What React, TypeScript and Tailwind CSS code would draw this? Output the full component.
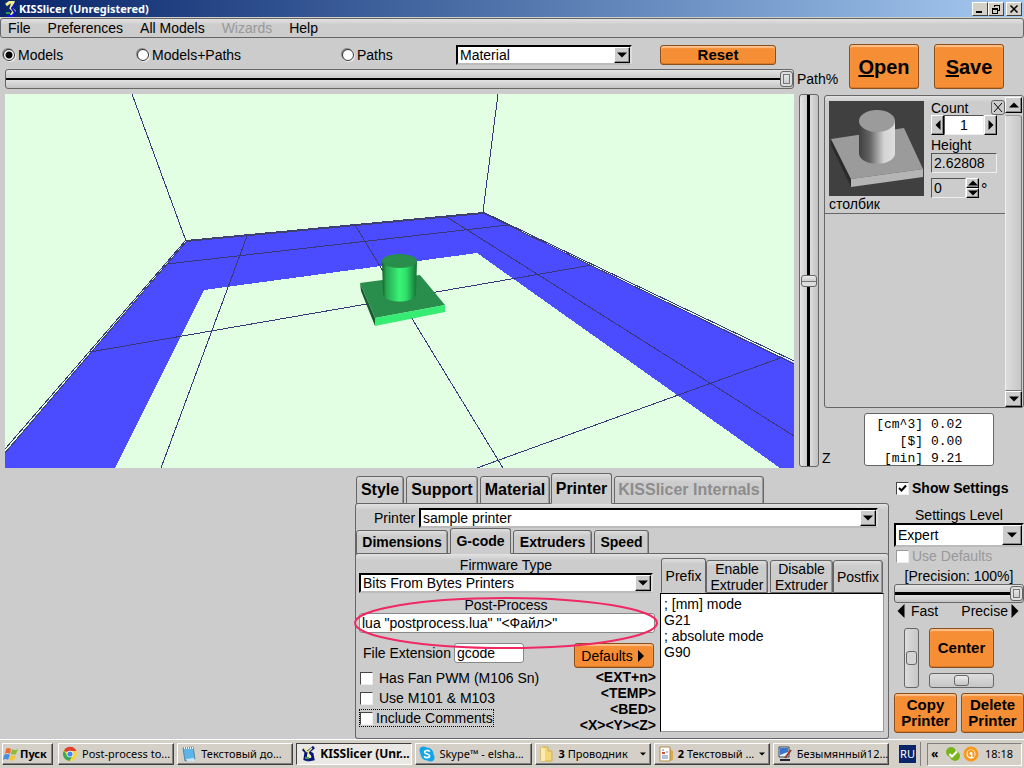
import { useState, type ReactNode } from "react";

type Point = [number, number];

const MENU_ITEMS = [
  { label: "File", disabled: false },
  { label: "Preferences", disabled: false },
  { label: "All Models", disabled: false },
  { label: "Wizards", disabled: true },
  { label: "Help", disabled: false },
];

const GRID_LINES: [Point, Point][] = [
  [[167, 264], [508, 225]],
  [[90, 352], [592, 265]],
  [[477, 468], [783, 357]],
  [[247, 236], [161, 468]],
  [[355, 225], [503, 468]],
  [[445, 216], [794, 436]],
  [[132, 94], [186, 241]],
  [[498, 94], [483, 212]],
  [[186, 240], [5, 449]],
  [[483, 212], [794, 361]],
];

const PREFIX_GCODE = "; [mm] mode\nG21\n; absolute mode\nG90";

const FRAME = "rounded-[3px] border border-[#666] bg-linear-to-b from-[#e2e2e2] via-[#ccc] via-[6px] to-[#ccc]";
const ORANGE =
  "rounded-[3px] border border-[#8a4f1c] bg-[#f58e34] shadow-[inset_0_2px_1px_#fbc08c,inset_0_-1px_0_#d97a28] text-black";
const SUNKEN = "border border-t-[#555] border-l-[#555] border-r-[#eee] border-b-[#eee]";
const RAISED = "border border-t-white border-l-white border-r-black border-b-black shadow-[inset_-1px_-1px_0_#888]";

function Triangle({ dir, size = 10 }: { dir: "up" | "down" | "left" | "right"; size?: number }) {
  const paths = {
    up: "M0 7.5 L5 2.5 L10 7.5 Z",
    down: "M0 2.5 L5 7.5 L10 2.5 Z",
    left: "M7.5 0 L2.5 5 L7.5 10 Z",
    right: "M2.5 0 L7.5 5 L2.5 10 Z",
  };
  return (
    <svg width={size} height={size} viewBox="0 0 10 10" className="shrink-0" aria-hidden="true">
      <path d={paths[dir]} fill="currentColor" />
    </svg>
  );
}

function Dropdown({ id, value, label, className }: { id: string; value: string; label?: string; className: string }) {
  return (
    <div className={`relative ${className}`}>
      <select
        id={id}
        aria-label={label}
        className="h-full w-full appearance-none border-2 border-t-black border-r-[#ddd] border-b-[#bbb] border-l-black bg-white pl-0.5 leading-4 outline-none"
      >
        <option>{value}</option>
      </select>
      <span className={`pointer-events-none absolute top-0.5 right-0.5 bottom-0.5 flex aspect-square items-center justify-center bg-[#ccc] ${RAISED}`}>
        <Triangle dir="down" />
      </span>
    </div>
  );
}

function Check({ label, checked = false, disabled = false, className = "" }: { label: string; checked?: boolean; disabled?: boolean; className?: string }) {
  return (
    <label className={`flex h-4 items-center ${disabled ? "text-[#999]" : ""} ${className}`}>
      <span className="relative mr-[3px] h-[13px] w-[13px] shrink-0">
        <input
          type="checkbox"
          defaultChecked={checked}
          disabled={disabled}
          className="peer block h-[13px] w-[13px] appearance-none border border-t-[#444] border-r-[#eee] border-b-[#eee] border-l-[#444] bg-white disabled:border-t-[#999] disabled:border-l-[#999]"
        />
        <svg viewBox="0 0 13 13" className="pointer-events-none absolute inset-0 hidden peer-checked:block" aria-hidden="true">
          <path d="M3 6 L5.5 8.5 L10 3.5" fill="none" stroke="#000" strokeWidth="2" />
        </svg>
      </span>
      {label}
    </label>
  );
}

function Tab({ children, active, disabled, className }: { children: ReactNode; active?: boolean; disabled?: boolean; className: string }) {
  return (
    <button
      type="button"
      role="tab"
      aria-selected={!!active}
      disabled={disabled}
      className={`rounded-t-[3px] border border-[#666] bg-linear-to-b from-[#dedede] via-[#ccc] via-[5px] to-[#ccc] whitespace-nowrap disabled:text-[#8c8c8c] ${
        active ? "relative border-b-[#ccc]" : "shadow-[inset_-1px_0_0_#999]"
      } ${className}`}
    >
      {children}
    </button>
  );
}

const H_SLIDER =
  "m-0 block appearance-none rounded-[3px] border border-[#666] [&::-webkit-slider-thumb]:appearance-none [&::-webkit-slider-thumb]:rounded-[3px] [&::-webkit-slider-thumb]:border [&::-webkit-slider-thumb]:border-[#666] [&::-webkit-slider-thumb]:bg-linear-to-b [&::-webkit-slider-thumb]:from-[#eee] [&::-webkit-slider-thumb]:to-[#c4c4c4]";
const H_GROOVE =
  "bg-[linear-gradient(to_bottom,#e4e4e4_0,#ccc_40%,#ccc_41%,#ccc_42%,#000_42%,#000_57%,#e0e0e0_57%,#c4c4c4_100%)]";
const KNOB_LINE =
  "[&::-webkit-slider-thumb]:shadow-[inset_0_0_0_2px_#ddd,inset_0_0_0_3px_#777] [&::-webkit-slider-thumb]:w-[13px]";

function PrintBedView() {
  return (
    <svg viewBox="5 94 789 374" className="block w-full bg-[#e3ffe3]" role="img" aria-label="Print bed">
      <defs>
        <linearGradient id="bedCylinder">
          <stop offset="0" stopColor="#115c2c" />
          <stop offset="0.12" stopColor="#28a650" />
          <stop offset="0.5" stopColor="#39f577" />
          <stop offset="0.7" stopColor="#30dc68" />
          <stop offset="1" stopColor="#156e34" />
        </linearGradient>
      </defs>
      <path
        d="M186 241 L483 213 L794 363 V468 H780 L477 253 L204 290 L115 468 H5 V452 Z"
        fill="#4b4bff"
        shapeRendering="crispEdges"
      />
      <path d="M187 241 L5 453 M483 213 L794 364" stroke="#404070" fill="none" shapeRendering="crispEdges" />
      {GRID_LINES.map(([from, to], index) => (
        <line
          key={index}
          x1={from[0]}
          y1={from[1]}
          x2={to[0]}
          y2={to[1]}
          stroke="#383878"
          strokeWidth="1"
          shapeRendering="crispEdges"
        />
      ))}
      <path d="M186 241 L483 213" stroke="#404070" strokeWidth="2" shapeRendering="crispEdges" />
      <path d="M360 283 L375 318 V326 L361 291 Z" fill="#155a2c" />
      <path d="M360 283 L420 275 L445 305 L375 318 Z" fill="#298d4c" />
      <path d="M375 318 L445 305 V312 L375 326 Z" fill="#36ec72" />
      <path d="M382 261 H417 L416 294 C415 304 384 304 383 294 Z" fill="url(#bedCylinder)" />
      <ellipse cx="399.5" cy="261" rx="17.5" ry="7" fill="#298d4c" />
    </svg>
  );
}

function ModelThumbnail() {
  return (
    <svg width="95" height="95" viewBox="0 0 95 95" className="block bg-[#404040]" role="img" aria-label="столбик">
      <defs>
        <linearGradient id="thumbCylinder">
          <stop offset="0" stopColor="#404040" />
          <stop offset="0.3" stopColor="#636363" />
          <stop offset="0.7" stopColor="#d4d4d4" />
          <stop offset="1" stopColor="#dedede" />
        </linearGradient>
      </defs>
      <path d="M2 38 L22 78 V86 L2 44 Z" fill="#2b2b2b" />
      <path d="M2 38 L75 27 L94 68 L22 78 Z" fill="#9b9b9b" />
      <path d="M22 78 L94 68 V76 L22 86 Z" fill="#b5b5b5" />
      <path d="M30 20 H66 V53 C64 66 32 66 30 53 Z" fill="url(#thumbCylinder)" />
      <ellipse cx="48" cy="20" rx="18" ry="11" fill="#9b9b9b" />
    </svg>
  );
}

function KissIcon({ size = 16 }: { size?: number }) {
  return (
    <svg width={size} height={size} viewBox="0 0 16 16" className="shrink-0" aria-hidden="true">
      <path d="M3 3 L6 6 L5 13 L8 14 M14 1 L8 6 L12 8 L13 13 L8 14" fill="none" stroke="#06147a" strokeWidth="3" />
      <path d="M4 2 L7 6 M12 2 L8 6 L9 9 L11 11" fill="none" stroke="#f0ee8c" strokeWidth="1.5" />
      <path d="M5 12 H9" stroke="#3f9f4a" strokeWidth="2" />
    </svg>
  );
}

function TitleBar() {
  const button =
    "flex h-3.5 w-4 items-center justify-center border border-t-white border-l-white border-r-[#404040] border-b-[#404040] bg-[#d4d0c8]";
  return (
    <header className="flex h-[18px] items-center border-b border-[#d4d0c8] bg-linear-to-r from-[#0a246a] to-[#a6caf0] pr-0.5 pl-0.5 font-['Noto_Sans',sans-serif] text-[11px] font-bold text-white">
      <svg width="16" height="16" viewBox="0 0 16 16" aria-hidden="true">
        <path d="M4 4 L8 1 H11 L9 7 L12 10 L9 15" fill="none" stroke="#f0ee8c" strokeWidth="3" />
        <path d="M13 3 L10 7 L13 12 L10 15 H5" fill="none" stroke="#1010e0" strokeWidth="2" />
        <path d="M4 12 H8" stroke="#2d9b45" strokeWidth="2" />
      </svg>
      <h1 className="ml-px text-[11px] leading-4">KISSlicer (Unregistered)</h1>
      <div className="ml-auto flex">
        <button type="button" aria-label="Minimize" className={button}>
          <svg width="10" height="10" viewBox="0 0 10 10"><path d="M1 8 H7" stroke="#000" strokeWidth="2" /></svg>
        </button>
        <button type="button" aria-label="Restore" className={button}>
          <svg width="10" height="10" viewBox="0 0 10 10" fill="none" stroke="#000" shapeRendering="crispEdges">
            <path d="M3.5 3 V1.5 H8.5 V6.5 H7 M3 1.5 H9 M1.5 4.5 H6.5 V9.5 H1.5 Z M1 5.5 H7" />
          </svg>
        </button>
        <button type="button" aria-label="Close" className={`ml-0.5 ${button}`}>
          <svg width="10" height="10" viewBox="0 0 10 10"><path d="M1.5 1.5 L8.5 8.5 M8.5 1.5 L1.5 8.5" stroke="#000" strokeWidth="1.5" /></svg>
        </button>
      </div>
    </header>
  );
}

function Toolbar() {
  const [mode, setMode] = useState("Models");
  const modes = [
    { name: "Models", width: "w-[134px]" },
    { name: "Models+Paths", width: "w-[205px]" },
    { name: "Paths", width: "w-[114px]" },
  ];
  return (
    <div className="flex">
      <div className="min-w-0 flex-1">
        <div className="flex h-[31px] items-center pt-0.5 pl-[3px]">
          {modes.map(({ name, width }) => (
            <label key={name} className={`flex items-center gap-[3px] ${width}`}>
              <input
                type="radio"
                name="view-mode"
                checked={mode === name}
                onChange={() => setMode(name)}
                className="h-3 w-3 appearance-none rounded-full border border-[#333] bg-white shadow-[1px_1px_0_#eee,-1px_-1px_0_#888] checked:bg-[radial-gradient(circle,#000_3px,#fff_4px)]"
              />
              {name}
            </label>
          ))}
          <Dropdown id="color-mode" label="Color by" value="Material" className="h-5 w-[176px]" />
          <button type="button" className={`ml-7 h-5 w-[116px] text-[15px] leading-4 font-bold ${ORANGE}`}>
            Reset
          </button>
        </div>
        <div className="flex items-center pl-[5px]">
          <input
            id="path-percent"
            type="range"
            defaultValue={100}
            className={`h-5 min-w-0 flex-1 [&::-webkit-slider-thumb]:h-4 ${H_SLIDER} ${H_GROOVE} ${KNOB_LINE}`}
          />
          <label htmlFor="path-percent" className="w-[55px] pl-[3px]">Path%</label>
        </div>
      </div>
      <div className="flex gap-[15px] pt-1.5 pr-5">
        <button type="button" className={`h-[45px] w-[70px] text-xl font-bold ${ORANGE}`}>
          <span className="underline">O</span>pen
        </button>
        <button type="button" className={`h-[45px] w-[70px] text-xl font-bold ${ORANGE}`}>
          <span className="underline">S</span>ave
        </button>
      </div>
    </div>
  );
}

function ModelList() {
  return (
    <section className={`ml-[3px] flex h-[313px] pr-px ${FRAME}`}>
      <div className="min-w-0 flex-1">
        <div className="flex border-b border-[#666] pt-[5px] pb-px pl-1">
          <div className="w-[95px]">
            <ModelThumbnail />
            <p className="leading-4">столбик</p>
          </div>
          <div className="min-w-0 flex-1 pl-[7px]">
            <div className="flex h-[13px] items-center">
              <label htmlFor="model-count">Count</label>
              <button type="button" aria-label="Remove model" className="ml-auto flex h-[15px] w-[14px] items-center justify-center rounded-[3px] border border-[#666]">
                <svg width="10" height="11" viewBox="0 0 10 11"><path d="M1 1 L9 10 M9 1 L1 10" stroke="#000" /></svg>
              </button>
            </div>
            <div className="mt-px flex h-5">
              <button type="button" aria-label="Fewer" className={`flex w-[13px] items-center justify-center ${RAISED}`}>
                <Triangle dir="left" />
              </button>
              <input id="model-count" defaultValue="1" className={`w-10 bg-white text-center ${SUNKEN}`} />
              <button type="button" aria-label="More" className={`flex w-[13px] items-center justify-center ${RAISED}`}>
                <Triangle dir="right" />
              </button>
            </div>
            <label htmlFor="model-height" className="mt-0.5 block leading-4">Height</label>
            <input id="model-height" readOnly defaultValue="2.62808" className={`block h-5 w-[66px] pl-0.5 ${SUNKEN}`} />
            <div className="mt-[5px] flex h-5">
              <input aria-label="Rotation" defaultValue="0" className={`w-[35px] pl-0.5 ${SUNKEN}`} />
              <div className="flex w-[13px] flex-col">
                <button type="button" aria-label="Rotate up" className={`flex h-2.5 items-center justify-center ${RAISED}`}>
                  <Triangle dir="up" />
                </button>
                <button type="button" aria-label="Rotate down" className={`flex h-2.5 items-center justify-center ${RAISED}`}>
                  <Triangle dir="down" />
                </button>
              </div>
              <span className="pl-0.5 text-base">°</span>
            </div>
          </div>
        </div>
      </div>
      <div className="flex w-[17px] flex-col pt-px">
        <button type="button" aria-label="Scroll up" className={`flex h-4 items-center justify-center bg-[#ccc] ${RAISED}`}>
          <Triangle dir="up" />
        </button>
        <div className="mt-0.5 flex-1 rounded-t-[3px] border border-[#777] border-t-[#999] border-l-[#eee] bg-linear-to-r from-[#ddd] to-[#c6c6c6]" />
        <button type="button" aria-label="Scroll down" className={`flex h-4 items-center justify-center bg-[#ccc] ${RAISED}`}>
          <Triangle dir="down" />
        </button>
      </div>
    </section>
  );
}

function Workspace() {
  const stats = [
    ["[cm^3]", "0.02"],
    ["[$]", "0.00"],
    ["[min]", "9.21"],
  ];
  return (
    <div className="flex items-start pt-[5px] pl-[5px]">
      <div className="min-w-0 flex-1">
        <PrintBedView />
      </div>
      <input
        id="z-slider"
        type="range"
        defaultValue={50}
        className="m-0 ml-[5px] block h-[373px] w-5 appearance-none rounded-[3px] border border-[#666] bg-[linear-gradient(to_right,#e4e4e4_0,#ccc_40%,#000_40%,#000_56%,#ddd_56%,#c0c0c0_100%)] [direction:rtl] [writing-mode:vertical-lr] [&::-webkit-slider-thumb]:h-3 [&::-webkit-slider-thumb]:w-4 [&::-webkit-slider-thumb]:appearance-none [&::-webkit-slider-thumb]:rounded-[3px] [&::-webkit-slider-thumb]:border [&::-webkit-slider-thumb]:border-[#666] [&::-webkit-slider-thumb]:bg-[linear-gradient(to_bottom,#eee,#ccc_50%,#777_50%,#777_60%,#ddd_60%)]"
      />
      <div className="ml-0.5 w-[203px] pt-px">
        <ModelList />
        <div className="mt-[5px] flex items-end">
          <label htmlFor="z-slider" className="w-[43px] pl-px leading-4">Z</label>
          <table className="block h-[53px] w-[130px] rounded-[3px] border border-[#666] bg-white pt-0.5 font-['Liberation_Mono',monospace] text-[13px] leading-[17px]">
            <tbody>
              {stats.map(([unit, value]) => (
                <tr key={unit}>
                  <th scope="row" className="w-[58px] p-0 text-right font-normal">{unit}</th>
                  <td className="p-0 pl-2">{value}</td>
                </tr>
              ))}
            </tbody>
          </table>
        </div>
      </div>
    </div>
  );
}

function GcodeEditor() {
  return (
    <div className="min-w-0 flex-1">
      <div role="tablist" className="flex items-end pl-px leading-4">
        <Tab active className="h-[35px] w-[45px]">Prefix</Tab>
        <Tab className="h-[33px] w-[62px]">Enable<br />Extruder</Tab>
        <Tab className="ml-0.5 h-[33px] w-[63px]">Disable<br />Extruder</Tab>
        <Tab className="h-[33px] w-[50px]">Postfix</Tab>
      </div>
      <textarea
        aria-label="Prefix G-code"
        defaultValue={PREFIX_GCODE}
        className="block h-[139px] w-full resize-none border border-t-black border-r-[#999] border-b-[#999] border-l-black bg-white px-[3px] py-0.5 leading-4 outline-none"
      />
    </div>
  );
}

function GcodePanel() {
  return (
    <div className={`flex pt-[3px] pr-1 pb-[5px] pl-[3px] ${FRAME}`}>
      <div className="w-[297px] shrink-0">
        <label htmlFor="firmware" className="block w-[294px] text-center leading-4">Firmware Type</label>
        <Dropdown id="firmware" value="Bits From Bytes Printers" className="h-5 w-[294px]" />
        <div className="relative mt-1">
          <label htmlFor="post-process" className="block w-[294px] text-center leading-4">Post-Process</label>
          <input
            id="post-process"
            defaultValue={'lua "postprocess.lua" "<Файл>"'}
            className="block h-5 w-[296px] rounded-[3px] border border-[#888] bg-white pl-0.5 leading-4"
          />
          <svg viewBox="0 0 304 52" className="pointer-events-none absolute top-0 -left-[5px] z-10 h-[52px] w-[304px]" aria-hidden="true">
            <ellipse cx="152" cy="26" rx="151" ry="25" fill="none" stroke="#f02864" strokeWidth="2" />
          </svg>
        </div>
        <div className="mt-2.5 flex justify-between">
          <div>
            <div className="flex h-5 items-center pl-1">
              <label htmlFor="extension" className="w-[91px]">File Extension</label>
              <input id="extension" defaultValue="gcode" className="h-5 w-[70px] rounded-[3px] border border-[#888] bg-white pl-0.5" />
            </div>
            <div className="mt-[7px] flex flex-col items-start gap-1 pl-px">
              <Check label="Has Fan PWM (M106 Sn)" className="gap-[3px]" />
              <Check label="Use M101 & M103" className="gap-[3px]" />
              <Check label="Include Comments" className="outline outline-dotted outline-black" />
            </div>
          </div>
          <div className="flex flex-col items-end">
            <button type="button" className={`mr-0.5 flex h-[25px] w-20 items-center justify-center gap-0.5 ${ORANGE}`}>
              Defaults <Triangle dir="right" size={12} />
            </button>
            <p className="mt-px text-right leading-4 font-bold">
              &lt;EXT+n&gt;<br />&lt;TEMP&gt;<br />&lt;BED&gt;<br />&lt;X&gt;&lt;Y&gt;&lt;Z&gt;
            </p>
          </div>
        </div>
      </div>
      <div className="flex min-w-0 flex-1 pt-px pl-1">
        <GcodeEditor />
      </div>
    </div>
  );
}

function PrinterSettings() {
  return (
    <section className="w-[534px] pt-[5px]">
      <div role="tablist" className="relative -mb-px flex items-end pl-px text-base font-bold">
        <Tab className="h-7 w-12">Style</Tab>
        <Tab className="ml-0.5 h-7 w-[72px]">Support</Tab>
        <Tab className="ml-0.5 h-7 w-[70px]">Material</Tab>
        <Tab active className="ml-px h-[31px] w-[61px]">Printer</Tab>
        <Tab disabled className="ml-0.5 h-7 w-[150px]">KISSlicer Internals</Tab>
      </div>
      <div className={FRAME}>
        <div className="flex items-center pt-1 pr-2.5 pl-[18px]">
          <label htmlFor="printer" className="w-[45px]">Printer</label>
          <Dropdown id="printer" value="sample printer" className="h-5 flex-1" />
        </div>
        <div role="tablist" className="relative -mb-px flex items-end text-sm font-bold">
          <Tab className="h-6 w-[92px]">Dimensions</Tab>
          <Tab active className="ml-0.5 h-[26px] w-[61px]">G-code</Tab>
          <Tab className="ml-0.5 h-6 w-[79px]">Extruders</Tab>
          <Tab className="ml-0.5 h-6 w-[55px]">Speed</Tab>
        </div>
        <div className="-mx-px -mb-px">
          <GcodePanel />
        </div>
      </div>
    </section>
  );
}

function SideControls() {
  return (
    <aside className="ml-[5px] w-[130px] pt-[11px]">
      <Check label="Show Settings" checked className="ml-0.5 h-[18px] font-bold" />
      <label htmlFor="level" className="mt-2.5 block text-center leading-4">Settings Level</label>
      <Dropdown id="level" value="Expert" className="h-6" />
      <Check label="Use Defaults" disabled className="mt-px ml-0.5" />
      <label htmlFor="precision" className="mt-1 block text-center leading-4">[Precision: 100%]</label>
      <input
        id="precision"
        type="range"
        defaultValue={100}
        className={`h-[19px] w-full [&::-webkit-slider-thumb]:h-[15px] ${H_SLIDER} ${H_GROOVE} ${KNOB_LINE}`}
      />
      <div className="flex h-4 items-center justify-between pr-0.5">
        <span className="flex items-center gap-[3px]"><Triangle dir="left" size={14} />Fast</span>
        <span className="flex items-center">Precise<Triangle dir="right" size={14} /></span>
      </div>
      <div className="mt-[9px] flex gap-2.5 pl-2.5">
        <input
          type="range"
          aria-label="Move Y"
          defaultValue={50}
          className="m-0 block h-[60px] w-[15px] appearance-none rounded-[3px] border border-[#666] bg-linear-to-r from-[#ddd] to-[#c6c6c6] [writing-mode:vertical-lr] [&::-webkit-slider-thumb]:h-3.5 [&::-webkit-slider-thumb]:w-[11px] [&::-webkit-slider-thumb]:appearance-none [&::-webkit-slider-thumb]:rounded-[3px] [&::-webkit-slider-thumb]:border [&::-webkit-slider-thumb]:border-[#666] [&::-webkit-slider-thumb]:bg-[#d4d4d4]"
        />
        <div className="flex w-[65px] flex-col gap-[5px]">
          <button type="button" className={`h-10 text-[15px] font-bold ${ORANGE}`}>Center</button>
          <input
            type="range"
            aria-label="Move X"
            defaultValue={50}
            className={`h-[15px] w-full bg-linear-to-b from-[#ddd] to-[#c6c6c6] [&::-webkit-slider-thumb]:h-[11px] [&::-webkit-slider-thumb]:w-[15px] ${H_SLIDER}`}
          />
        </div>
      </div>
      <div className="mt-[5px] flex gap-1 text-[15px] leading-4 font-bold">
        <button type="button" className={`h-10 flex-1 ${ORANGE}`}>Copy<br />Printer</button>
        <button type="button" className={`h-10 flex-1 ${ORANGE}`}>Delete<br />Printer</button>
      </div>
    </aside>
  );
}

function TaskIcon({ kind }: { kind: string }) {
  if (kind === "kiss") return <KissIcon />;
  return (
    <svg width="16" height="16" viewBox="0 0 16 16" className="shrink-0" aria-hidden="true">
      {kind === "chrome" && (
        <>
          <circle cx="8" cy="8" r="7" fill="#f9d33a" />
          <path d="M8 8 L2 4.4 A7 7 0 0 1 14.5 5 H8 Z" fill="#e0402f" />
          <path d="M2 4.4 A7 7 0 0 0 7.5 15 L10.5 9.5 L5 9.5 Z" fill="#3aa757" />
          <circle cx="8" cy="8" r="3.3" fill="#fff" />
          <circle cx="8" cy="8" r="2.6" fill="#4285f4" />
        </>
      )}
      {kind === "notepad" && (
        <>
          <path d="M2 2 L12 1 L14 13 L4 15 Z" fill="#5bb5e8" stroke="#5a86a0" />
          <path d="M3 2 H12" stroke="#e8f4fa" strokeWidth="2" strokeDasharray="1 1" />
          <path d="M5 13 L13 12 L14 15 H6 Z" fill="#c9e6f5" />
        </>
      )}
      {kind === "skype" && (
        <>
          <circle cx="8" cy="8" r="6.5" fill="#12a5e8" />
          <circle cx="4.5" cy="4.5" r="4" fill="#12a5e8" />
          <circle cx="11.5" cy="11.5" r="4" fill="#12a5e8" />
          <path d="M10.7 5.8 C10 3.8 5.5 4 5.6 6.2 C5.7 8.4 10.5 7.4 10.6 9.8 C10.6 12.2 5.8 12.2 5.2 10" fill="none" stroke="#fff" strokeWidth="1.6" />
        </>
      )}
      {kind === "folder" && (
        <>
          <path d="M2 1 H9 V5 H13 V15 H2 Z" fill="#f3d877" stroke="#d5ad42" />
          <path d="M2 1 L6 3 V15 H2 Z" fill="#fbecac" />
        </>
      )}
      {kind === "document" && (
        <>
          <path d="M12 3 L15 5 V14 L12 15 Z" fill="#d8a952" />
          <path d="M2 1 H12 V15 H2 Z" fill="#fff" stroke="#b08b4a" />
          <path d="M4 4 H6 M4 10 H10 M4 12 H10 M8 6 H10" stroke="#6a82b8" />
          <path d="M4 7 H7" stroke="#c05040" strokeWidth="2" />
        </>
      )}
      {kind === "paint" && (
        <>
          <path d="M2 1 H12 V11 H2 Z" fill="#e8f0f8" stroke="#345" />
          <path d="M3 2 H11 V6 L3 9 Z" fill="#3a74cc" />
          <path d="M3 14 H13" stroke="#223" strokeWidth="2" />
          <path d="M14 4 L8 12" stroke="#9b3b2b" strokeWidth="2" />
        </>
      )}
    </svg>
  );
}

function Taskbar() {
  const tasks = [
    { icon: "chrome", text: "Post-process to..." },
    { icon: "notepad", text: "Текстовый до..." },
    { icon: "kiss", text: "KISSlicer (Unr...", active: true },
    { icon: "skype", text: "Skype™ - elsha..." },
    { icon: "folder", count: "3", text: "Проводник" },
    { icon: "document", count: "2", text: "Текстовый ..." },
    { icon: "paint", text: "Безымянный12..." },
  ];
  const raised =
    "border border-t-white border-l-white border-r-[#404040] border-b-[#404040] shadow-[inset_-1px_-1px_0_#808080]";
  return (
    <footer className="mt-auto flex h-[29px] items-center border-t border-white bg-[#d4d0c8] px-0.5 font-['Noto_Sans',sans-serif] text-[11px]">
      <button type="button" className={`mr-[5px] flex h-[22px] w-[51px] items-center gap-px text-[11px] font-bold ${raised}`}>
        <svg width="16" height="16" viewBox="0 0 16 16" className="shrink-0" aria-hidden="true">
          <path d="M3 3 Q5 1 8 3 L7 8 Q4 6 2 8 Z" fill="#ec6b35" />
          <path d="M9 3 Q12 5 15 3 L13 8 Q11 9 8 8 Z" fill="#86bd3a" />
          <path d="M1 9 Q4 7 7 9 L5 14 Q3 12 0 14 Z" fill="#4b8fe0" />
          <path d="M8 9 Q10 11 13 9 L11 14 Q8 15 6 14 Z" fill="#f8c530" />
        </svg>
        Пуск
      </button>
      <nav className="flex min-w-0 flex-1 gap-[3px]">
        {tasks.map((task) => (
          <button
            key={task.icon}
            type="button"
            className={`flex h-[22px] min-w-0 flex-1 items-center gap-1 pl-[3px] whitespace-nowrap ${
              task.active
                ? "border border-t-[#404040] border-r-white border-b-white border-l-[#404040] bg-[#eae8e4] text-xs font-bold"
                : raised
            }`}
          >
            <TaskIcon kind={task.icon} />
            <span>
              {task.count && <b>{task.count} </b>}
              {task.text}
            </span>
            {task.count && (
              <span className="mr-1 ml-auto">
                <Triangle dir="down" size={6} />
              </span>
            )}
          </button>
        ))}
      </nav>
      <span className="mr-1 ml-2.5 w-[17px] bg-[#0a246a] text-center leading-[18px] text-white">RU</span>
      <div className="mr-1.5 h-6 w-px bg-[#808080]" />
      <div className="flex h-[23px] w-[95px] items-center gap-0.5 border border-t-[#808080] border-r-white border-b-white border-l-[#808080] pl-[3px]">
        <span className="w-3 text-xs font-bold">«</span>
        <svg width="16" height="16" viewBox="0 0 16 16" aria-hidden="true">
          <circle cx="6" cy="6" r="5" fill="#7ab51d" />
          <circle cx="10" cy="10" r="5" fill="#7ab51d" />
          <path d="M4.5 8 L7 10.5 L12 5.5" fill="none" stroke="#fff" strokeWidth="2" />
        </svg>
        <svg width="16" height="16" viewBox="0 0 16 16" aria-hidden="true">
          <circle cx="8" cy="8" r="6" fill="#fff" stroke="#f8981d" strokeWidth="3" />
          <path d="M10.5 11 V7 A2.5 2.5 0 1 0 8 10" fill="none" stroke="#f8981d" strokeWidth="2" />
        </svg>
        <time className="ml-1">18:18</time>
      </div>
    </footer>
  );
}

export default function App() {
  return (
    <div className="flex min-h-screen flex-col bg-[#ccc] font-['Liberation_Sans',Arial,sans-serif] text-sm leading-4 text-black">
      <TitleBar />
      <nav className={`flex h-5 items-center gap-[17px] pl-[7px] ${FRAME}`}>
        {MENU_ITEMS.map((item) => (
          <button key={item.label} type="button" disabled={item.disabled} className="disabled:text-[#999]">
            {item.label}
          </button>
        ))}
      </nav>
      <main>
        <Toolbar />
        <Workspace />
        <div className="flex justify-end">
          <PrinterSettings />
          <SideControls />
        </div>
      </main>
      <Taskbar />
    </div>
  );
}
